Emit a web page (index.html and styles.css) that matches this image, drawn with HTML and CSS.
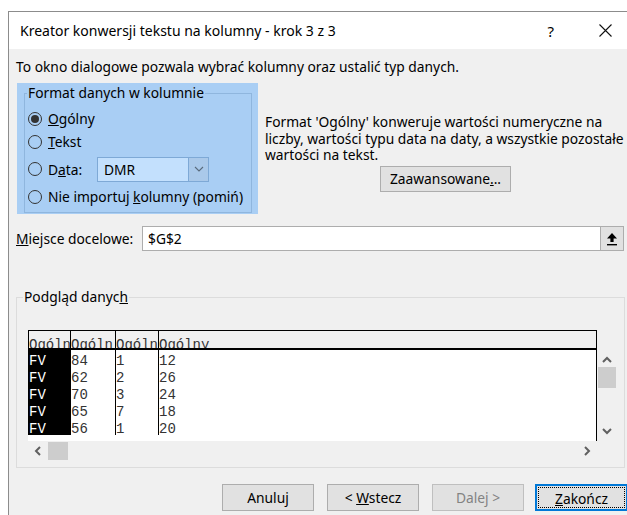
FILE: index.html
```html
<!DOCTYPE html>
<html lang="pl">
<head>
<meta charset="utf-8">
<title>Kreator konwersji tekstu na kolumny</title>
<link rel="stylesheet" href="styles.css">
</head>
<body>
<div class="dialog">
  <div class="titlebar">
    <span class="title">Kreator konwersji tekstu na kolumny - krok 3 z 3</span>
    <span class="help">?</span>
    <svg class="close" width="13" height="13" viewBox="0 0 13 13"><path d="M0.5 0.5 L12.5 12.5 M12.5 0.5 L0.5 12.5" stroke="#111" stroke-width="1.1" fill="none"/></svg>
  </div>
  <div class="content">
    <p class="intro">To okno dialogowe pozwala wybrać kolumny oraz ustalić typ danych.</p>

    <div class="options">
      <div class="formatbox">
        <fieldset class="group">
          <legend>Format danych w kolumnie</legend>
          <div class="radio"><span class="dot on"></span><span><u>O</u>gólny</span></div>
          <div class="radio"><span class="dot"></span><span><u>T</u>ekst</span></div>
          <div class="radio date"><span class="dot"></span><span class="datelabel">D<u>a</u>ta:</span>
            <div class="combo"><span class="combo-value">DMR</span><span class="combo-btn"><svg width="10" height="6" viewBox="0 0 10 6"><path d="M1 1 L5 5 L9 1" stroke="#5a6b7d" stroke-width="1.1" fill="none"/></svg></span></div>
          </div>
          <div class="radio"><span class="dot"></span><span>Nie importuj <u>k</u>olumny (pomiń)</span></div>
        </fieldset>
      </div>
      <div class="desc">
        <p>Format 'Ogólny' konweruje wartości numeryczne na liczby, wartości typu data na daty, a wszystkie pozostałe wartości na tekst.</p>
        <button class="btn advanced">Zaawansowane<u>.</u>..</button>
      </div>
    </div>

    <div class="dest">
      <span class="dest-label"><u>M</u>iejsce docelowe:</span>
      <div class="dest-field">
        <span class="dest-value">$G$2</span>
        <span class="dest-btn"><svg width="12" height="14" viewBox="0 0 12 14"><path d="M6 1 L11 6.5 L7.6 6.5 L7.6 10 L4.4 10 L4.4 6.5 L1 6.5 Z" fill="#000"/><rect x="1" y="12" width="10" height="1.4" fill="#000"/></svg></span>
      </div>
    </div>

    <fieldset class="preview">
      <legend>Podgląd danyc<u>h</u></legend>
      <div class="preview-grid">
        <div class="sheet">
          <div class="row head">
            <span class="cell">Ogóln</span><span class="cell">Ogóln</span><span class="cell">Ogóln</span><span class="cell last">Ogólny</span>
          </div>
          <div class="row"><span class="cell sel">FV</span><span class="cell">84</span><span class="cell">1</span><span class="cell last">12</span></div>
          <div class="row"><span class="cell sel">FV</span><span class="cell">62</span><span class="cell">2</span><span class="cell last">26</span></div>
          <div class="row"><span class="cell sel">FV</span><span class="cell">70</span><span class="cell">3</span><span class="cell last">24</span></div>
          <div class="row"><span class="cell sel">FV</span><span class="cell">65</span><span class="cell">7</span><span class="cell last">18</span></div>
          <div class="row"><span class="cell sel">FV</span><span class="cell">56</span><span class="cell">1</span><span class="cell last">20</span></div>
        </div>
        <div class="vscroll">
          <svg width="10" height="7" viewBox="0 0 10 7"><path d="M1 6 L5 2 L9 6" stroke="#606060" stroke-width="2" fill="none"/></svg>
          <span class="vthumb"></span>
          <span class="vspacer"></span>
          <svg width="10" height="7" viewBox="0 0 10 7"><path d="M1 1 L5 5 L9 1" stroke="#606060" stroke-width="2" fill="none"/></svg>
        </div>
        <div class="hscroll">
          <svg width="7" height="10" viewBox="0 0 7 10"><path d="M6 1 L2 5 L6 9" stroke="#606060" stroke-width="2" fill="none"/></svg>
          <span class="hthumb"></span>
          <span class="hspacer"></span>
          <svg width="7" height="10" viewBox="0 0 7 10"><path d="M1 1 L5 5 L1 9" stroke="#606060" stroke-width="2" fill="none"/></svg>
        </div>
      </div>
    </fieldset>

    <div class="actions">
      <button class="btn">Anuluj</button>
      <button class="btn">&lt; <u>W</u>stecz</button>
      <button class="btn disabled">Dalej &gt;</button>
      <button class="btn default"><span class="focus"><u>Z</u>akończ</span></button>
    </div>
  </div>
</div>
</body>
</html>
```

FILE: styles.css
```css
html, body {
  margin: 0;
  padding: 0;
  background: #ffffff;
  overflow: hidden;
}

body {
  font-family: "Noto Sans", "Open Sans", sans-serif;
  font-size: 13.8px;
  color: #000;
}

.dialog {
  margin: 11px 0 0 8px;
  border-top: 1px solid #8c8c8c;
  border-left: 1px solid #8c8c8c;
  width: 640px;
  height: 520px;
  background: #f0f0f0;
}

/* caption bar */
.titlebar {
  height: 37px;
  background: #ffffff;
  display: flex;
  align-items: center;
  padding-left: 11px;
}
.title {
  font-size: 14px;
  flex: 1;
}
.help {
  font-size: 15px;
  margin-right: 45px;
}
.close {
  margin-right: 37px;
}

.content {
  padding: 9px 0 0 7px;
}

.intro {
  margin: 0;
  line-height: 18px;
  height: 18px;
}

/* format options */
.options {
  display: flex;
  margin-top: 7px;
  height: 131px;
}
.formatbox {
  margin-left: 1px;
  width: 241px;
  height: 131px;
  background: #a9cef4;
  box-sizing: border-box;
  padding: 1px 6px 1px 7px;
  display: flex;
}
.group {
  margin: 0;
  padding: 5px 0 0 3px;
  border: 1px solid #8fb6de;
  flex: 1;
  min-width: 0;
}
.group legend {
  padding: 0 1px;
  margin-left: -1px;
  line-height: 18px;
}
.radio {
  display: flex;
  align-items: center;
  height: 23px;
  gap: 6px;
}
.radio.date {
  height: 32px;
}
.dot {
  width: 14px;
  height: 14px;
  border: 1px solid #333;
  border-radius: 50%;
  background: #a9cef4;
  box-sizing: border-box;
  display: flex;
  align-items: center;
  justify-content: center;
  flex: 0 0 auto;
}
.dot.on::after {
  content: "";
  width: 8px;
  height: 8px;
  border-radius: 50%;
  background: #333;
}
.datelabel {
  width: 43px;
}
.combo {
  display: flex;
  width: 112px;
  height: 25px;
  box-sizing: border-box;
  border: 1px solid #7ea9d6;
  background: #c3e0fd;
}
.combo-value {
  flex: 1;
  padding-left: 6px;
  line-height: 23px;
}
.combo-btn {
  width: 19px;
  border-left: 1px solid #7ea9d6;
  background: #aac9ea;
  display: flex;
  align-items: center;
  justify-content: center;
}

.desc {
  margin-left: 7px;
  padding-top: 31px;
  width: 362px;
}
.desc p {
  margin: 0;
  line-height: 16.5px;
}

.btn {
  font-family: inherit;
  font-size: 13.8px;
  color: #000;
  background: #e1e1e1;
  border: 1px solid #adadad;
  border-radius: 0;
  padding: 0;
  height: 27px;
}
.advanced {
  margin: 2px 0 0 115px;
  width: 131px;
  height: 26px;
}

/* destination cell */
.dest {
  display: flex;
  align-items: center;
  margin-top: 12px;
  height: 25px;
}
.dest-label {
  width: 126px;
  white-space: nowrap;
}
.dest-field {
  display: flex;
  width: 482px;
  height: 25px;
  box-sizing: border-box;
  border: 1px solid #adadad;
  background: #fff;
}
.dest-value {
  flex: 1;
  padding-left: 5px;
  line-height: 23px;
}
.dest-btn {
  width: 22px;
  border-left: 1px solid #adadad;
  background: #e1e1e1;
  display: flex;
  align-items: center;
  justify-content: center;
}

/* data preview */
.preview {
  margin: 37px 0 0 0;
  width: 609px;
  height: 180px;
  box-sizing: border-box;
  padding: 24px 0 0 11px;
  border: 1px solid #dcdcdc;
}
.preview legend {
  padding: 0 1px;
  margin-left: -5px;
  line-height: 18px;
}
.preview-grid {
  display: grid;
  grid-template-columns: 569px 20px;
  grid-template-rows: 111px 20px;
}
.sheet {
  background: #fff;
  border-right: 1px solid #000;
  font-family: "Liberation Mono", "DejaVu Sans Mono", monospace;
  font-size: 14px;
  overflow: hidden;
}
.row {
  display: flex;
  height: 17px;
  line-height: 17px;
}
.cell {
  box-sizing: border-box;
  width: 43px;
  flex: 0 0 auto;
  padding-top: 3px;
  border-left: 1px solid #000;
  white-space: nowrap;
  color: #333;
}
.cell:first-child {
  width: 42px;
}
.cell:nth-child(2) {
  width: 45px;
}
.cell.last {
  flex: 1 1 auto;
}
.cell.sel {
  background: #000;
  color: #fff;
}
/* header captions sit on the heavy rule and lose their descenders */
.row.head {
  background: #f0f0f0;
  border-top: 1px solid #000;
  border-bottom: 2px solid #000;
  height: 17px;
  overflow: hidden;
}
.row.head .cell {
  padding-top: 6px;
  overflow: hidden;
}
.vscroll {
  grid-row: 1;
  grid-column: 2;
  margin-top: 19px;
  display: flex;
  flex-direction: column;
  align-items: center;
  padding-top: 7px;
  padding-bottom: 6px;
}
.vthumb {
  width: 18px;
  height: 21px;
  background: #cdcdcd;
  margin-top: 4px;
}
.vspacer, .hspacer {
  flex: 1;
}
.hscroll {
  grid-row: 2;
  grid-column: 1;
  display: flex;
  align-items: center;
  padding-left: 6px;
  padding-right: 6px;
}
.hthumb {
  width: 20px;
  height: 18px;
  background: #cdcdcd;
  margin-left: 7px;
}

/* dialog buttons */
.actions {
  display: flex;
  gap: 13px;
  margin: 16px 0 0 206px;
}
.actions .btn {
  width: 92px;
  height: 27px;
}
.btn.disabled {
  color: #838383;
  border-color: #bfbfbf;
}
.btn.default {
  border: 2px solid #0078d7;
  width: 93px;
  padding: 1px;
  margin-left: -2px;
}
.focus {
  display: block;
  height: 100%;
  box-sizing: border-box;
  border: 1px dotted #000;
  line-height: 21px;
}
```
